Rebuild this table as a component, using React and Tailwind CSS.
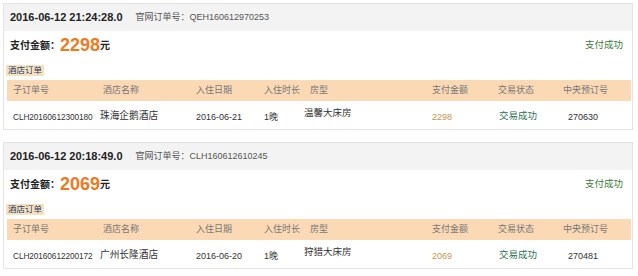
import React from "react";

const CJK = '"Liberation Sans", "Noto Sans CJK SC", sans-serif';

const orders = [
  {
    time: "2016-06-12 21:24:28.0",
    no: "QEH160612970253",
    amount: "2298",
    sub: "CLH20160612300180",
    hotel: "珠海企鹅酒店",
    date: "2016-06-21",
    nights: "1晚",
    room: "温馨大床房",
    central: "270630",
  },
  {
    time: "2016-06-12 20:18:49.0",
    no: "CLH160612610245",
    amount: "2069",
    sub: "CLH20160612200172",
    hotel: "广州长隆酒店",
    date: "2016-06-20",
    nights: "1晚",
    room: "狩猎大床房",
    central: "270481",
  },
];

const cols = "grid grid-cols-[93px_96px_68px_40px_128px_66px_65px_1fr]";

function Card({ o }) {
  return (
    <div className="ml-[3px] w-[630px] border border-[#e4e4e4] bg-white">
      <div className="flex h-[27px] items-center bg-[#f3f3f3] pl-[6px]">
        <span className="text-[11px] font-bold text-[#222]">{o.time}</span>
        <span className="ml-[13px] text-[9px] text-[#555]">官网订单号：{o.no}</span>
      </div>
      <div className="flex h-[28px] items-center pl-[6px] pr-[9px]">
        <span className="text-[10px] font-bold text-[#222]">支付金额：</span>
        <span className="text-[18px] font-bold leading-none text-[#ef7a1f]">{o.amount}</span>
        <span className="text-[10px] font-bold text-[#222]">元</span>
        <span className="ml-auto text-[9.5px] text-[#3b7b3b]">支付成功</span>
      </div>
      <div className="ml-[2px] mt-[6px] flex h-[11px] w-[38px] items-center justify-center bg-[#f8e2be] text-[8.5px] leading-none text-[#1e3d6e]">
        酒店订单
      </div>
      <div className="ml-[3px] mr-[1px] mt-[4px]">
        <div className={`${cols} h-[21px] items-center bg-[#fcd9b5] text-[9px] text-[#777]`}>
          <span className="pl-[6px]">子订单号</span>
          <span className="pl-[3px]">酒店名称</span>
          <span>入住日期</span>
          <span>入住时长</span>
          <span className="pl-[6px]">房型</span>
          <span>支付金额</span>
          <span>交易状态</span>
          <span>中央预订号</span>
        </div>
        <div className={`${cols} h-[28px] text-[9px] leading-[12px] text-[#333]`}>
          <span className="whitespace-nowrap pl-[6px] pt-[10px] text-[8.3px] tracking-[-0.1px]">{o.sub}</span>
          <span className="pt-[9px] text-[9.7px]">{o.hotel}</span>
          <span className="pt-[10px]">{o.date}</span>
          <span className="pt-[10px]">{o.nights}</span>
          <span className="pt-[6px] text-[9.5px]">{o.room}</span>
          <span className="pt-[10px] text-[#c8954f]">{o.amount}</span>
          <span className="pl-[1px] pt-[9px] text-[9.5px] text-[#2f7355]">交易成功</span>
          <span className="pl-[5px] pt-[10px]">{o.central}</span>
        </div>
      </div>
    </div>
  );
}

export default function App() {
  return (
    <div
      className="h-[276px] w-[638px] overflow-hidden bg-white pt-[3px]"
      style={{ fontFamily: CJK }}
    >
      <div className="flex flex-col gap-[12px]">
        {orders.map((o) => (
          <Card key={o.no} o={o} />
        ))}
      </div>
    </div>
  );
}
